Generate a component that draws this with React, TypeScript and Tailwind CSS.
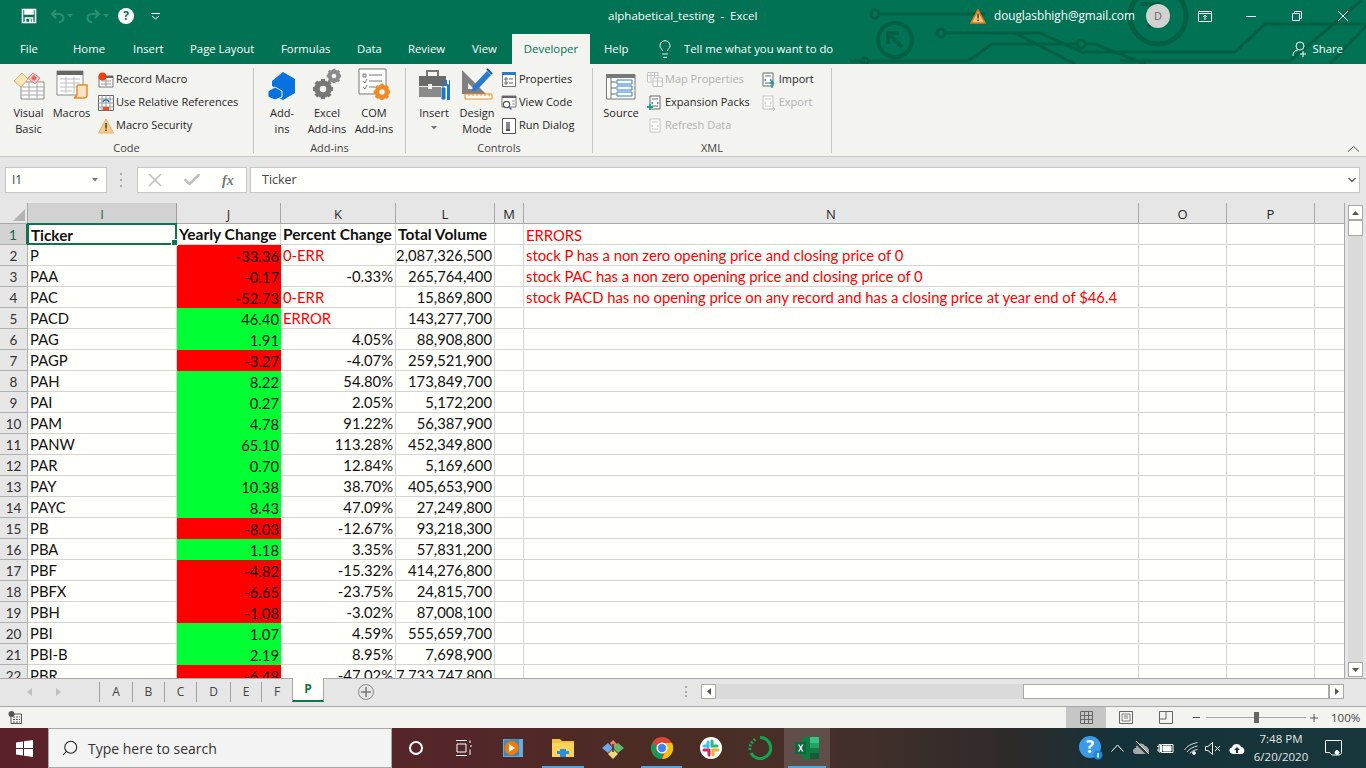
import { Fragment } from 'react';
import { ChevronDown, Lightbulb, X, Check, Search } from 'lucide-react';

const FONT = { fontFamily: '"Open Sans", "Noto Sans", sans-serif' };

type Row = { t: string; y: string; up?: boolean; p: string; perr?: boolean; v: string; n?: string };

const rows: Row[] = [
  { t: 'P', y: '-33.36', p: '0-ERR', perr: true, v: '2,087,326,500', n: 'stock P has a non zero opening price and closing price of 0' },
  { t: 'PAA', y: '-0.17', p: '-0.33%', v: '265,764,400', n: 'stock PAC has a non zero opening price and closing price of 0' },
  { t: 'PAC', y: '-52.73', p: '0-ERR', perr: true, v: '15,869,800', n: 'stock PACD has no opening price on any record and has a closing price at year end of $46.4' },
  { t: 'PACD', y: '46.40', up: true, p: 'ERROR', perr: true, v: '143,277,700' },
  { t: 'PAG', y: '1.91', up: true, p: '4.05%', v: '88,908,800' },
  { t: 'PAGP', y: '-3.27', p: '-4.07%', v: '259,521,900' },
  { t: 'PAH', y: '8.22', up: true, p: '54.80%', v: '173,849,700' },
  { t: 'PAI', y: '0.27', up: true, p: '2.05%', v: '5,172,200' },
  { t: 'PAM', y: '4.78', up: true, p: '91.22%', v: '56,387,900' },
  { t: 'PANW', y: '65.10', up: true, p: '113.28%', v: '452,349,800' },
  { t: 'PAR', y: '0.70', up: true, p: '12.84%', v: '5,169,600' },
  { t: 'PAY', y: '10.38', up: true, p: '38.70%', v: '405,653,900' },
  { t: 'PAYC', y: '8.43', up: true, p: '47.09%', v: '27,249,800' },
  { t: 'PB', y: '-8.03', p: '-12.67%', v: '93,218,300' },
  { t: 'PBA', y: '1.18', up: true, p: '3.35%', v: '57,831,200' },
  { t: 'PBF', y: '-4.82', p: '-15.32%', v: '414,276,800' },
  { t: 'PBFX', y: '-6.65', p: '-23.75%', v: '24,815,700' },
  { t: 'PBH', y: '-1.08', p: '-3.02%', v: '87,008,100' },
  { t: 'PBI', y: '1.07', up: true, p: '4.59%', v: '555,659,700' },
  { t: 'PBI-B', y: '2.19', up: true, p: '8.95%', v: '7,698,900' },
  { t: 'PBR', y: '-6.48', p: '-47.02%', v: '7,733,747,800' },
];

const headers = [
  { l: 'I', w: 'w-[149px]', sel: true },
  { l: 'J', w: 'w-[104px]' },
  { l: 'K', w: 'w-[115px]' },
  { l: 'L', w: 'w-[99px]' },
  { l: 'M', w: 'w-[29px]' },
  { l: 'N', w: 'w-[615px]' },
  { l: 'O', w: 'w-[88px]' },
  { l: 'P', w: 'w-[88px]' },
];

function Circuit() {
  return (
    <svg className="absolute left-[850px] top-0" width="516" height="64" viewBox="0 0 516 64" fill="none" stroke="#015f43" strokeWidth="3">
      <circle cx="25" cy="14" r="4" />
      <path d="M29 14H135" />
      <circle cx="91" cy="33" r="4" />
      <path d="M95 33H190L232 52H385L415 24H516" />
      <circle cx="231" cy="44" r="4" />
      <path d="M0 61H15M19 61H118L142 44H227M235 44H245L295 64M165 33L225 64M270 61H440L512 0" />
      <circle cx="15" cy="61" r="3" />
      <circle cx="45" cy="40" r="17" strokeWidth="4" />
      <path d="M38 44V33H49M38 33L52 47" strokeWidth="4" />
      <circle cx="308" cy="16" r="28" strokeWidth="5" />
      <path d="M290 4H308L298 28" strokeWidth="4" />
      <path d="M480 64L516 26" />
    </svg>
  );
}

function SaveIcon() {
  return (
    <svg width="16" height="16" viewBox="0 0 16 16" fill="none" stroke="#fff" strokeWidth="1.6">
      <path d="M1.5 1.5H14.5V14.5H1.5Z" />
      <path d="M4 1.5V6H12V1.5" fill="#fff" />
      <path d="M4.5 14.5V10H11.5V14.5" />
      <path d="M9 11V14" />
    </svg>
  );
}

function Undo({ flip }: { flip?: boolean }) {
  return (
    <svg width="15" height="14" viewBox="0 0 15 14" fill="none" stroke="#2b8f6f" strokeWidth="2" style={flip ? { transform: 'scaleX(-1)' } : undefined}>
      <path d="M6 1L2 5L6 9" />
      <path d="M2 5H9C12 5 13.5 7 13.5 9C13.5 11 12 13 9 13" />
    </svg>
  );
}

function Caret({ c = '#2b8f6f' }: { c?: string }) {
  return (
    <svg width="6" height="4" viewBox="0 0 6 4">
      <path d="M0 0H6L3 3.5Z" fill={c} />
    </svg>
  );
}

function VbaIcon() {
  return (
    <svg width="32" height="28" viewBox="0 0 32 28">
      <path d="M8 10H31V27H8Z" fill="#fff" stroke="#8a8a8a" />
      <path d="M8 15H31M8 19H31M8 23H31M16 10V27M24 10V27" stroke="#a8a8a8" />
      <path d="M1 9L9 1L15 7L8 15Z" fill="#fbe6b8" stroke="#d8b070" />
      <path d="M15 6L20 1L27 6L22 12Z" fill="#f6d0d0" stroke="#e07b7b" />
      <path d="M18 6L21 3L24 6L21 9Z" fill="#e85d5d" />
    </svg>
  );
}

function MacrosIcon() {
  return (
    <svg width="32" height="30" viewBox="0 0 32 30">
      <path d="M1 1H27V25H1Z" fill="#fff" stroke="#8a8a8a" />
      <path d="M1 1H27V5H1Z" fill="#666" />
      <path d="M4 9H24M4 13H24M4 17H24M4 21H16M10 7V23M18 7V23" stroke="#bdbdbd" />
      <path d="M22 15H31V25C31 27 30 28 28 28H18C20 27 21 26 21 24V17C21 16 21 15 22 15Z" fill="#fbe3c6" stroke="#f08a24" strokeWidth="1.5" />
    </svg>
  );
}

function RecordIcon() {
  return (
    <svg width="16" height="16" viewBox="0 0 16 16">
      <path d="M1 4H15V15H1Z" fill="#fff" stroke="#777" />
      <path d="M1 4H15V6H1Z" fill="#666" />
      <path d="M3 9H13M3 12H13M8 7V14" stroke="#999" />
      <circle cx="4.5" cy="4.5" r="4" fill="#f0400c" />
    </svg>
  );
}

function RelativeIcon() {
  return (
    <svg width="16" height="16" viewBox="0 0 16 16">
      <path d="M.5.5H15.5V15.5H.5Z" fill="#fff" stroke="#666" />
      <path d="M.5 4H15.5M.5 8H15.5M.5 12H15.5M4 .5V15.5M8 .5V15.5M12 .5V15.5" stroke="#999" />
      <path d="M5 12H11V15H5Z" fill="#f04a2a" />
      <path d="M5 7C6 4 10 4 11 7" fill="none" stroke="#2b78c5" strokeWidth="1.6" />
    </svg>
  );
}

function WarnIcon({ size = 16 }: { size?: number }) {
  return (
    <svg width={size} height={size} viewBox="0 0 16 16">
      <path d="M8 1L15.5 15H.5Z" fill="#f7c98a" stroke="#e9b36b" />
      <path d="M7.2 5H8.8V10.5H7.2ZM7.2 11.5H8.8V13H7.2Z" fill="#444" />
    </svg>
  );
}

function AddinsIcon() {
  return (
    <svg width="28" height="28" viewBox="0 0 28 28" fill="#0672e0">
      <path d="M15 0L27 7V21L15 28L9 25V17L4 14V9Z" />
      <path d="M7 15L14 19V25L7 28L0 25V19Z" stroke="#f3f3ef" strokeWidth="1" />
    </svg>
  );
}

function Gear({ x, y, r, c }: { x: number; y: number; r: number; c: string }) {
  return (
    <g>
      <circle cx={x} cy={y} r={r * 0.72} fill="none" stroke={c} strokeWidth={r * 0.5} />
      {[0, 45, 90, 135].map(a => (
        <rect key={a} x={x - r * 0.22} y={y - r * 1.12} width={r * 0.44} height={r * 2.24} fill={c} transform={`rotate(${a} ${x} ${y})`} />
      ))}
      <circle cx={x} cy={y} r={r * 0.36} fill="#f3f3ef" />
    </g>
  );
}

function ExcelAddinsIcon() {
  return (
    <svg width="28" height="32" viewBox="0 0 28 32">
      <Gear x={21} y={8} r={6.5} c="#8a8a8a" />
      <Gear x={10} y={21} r={9} c="#777" />
    </svg>
  );
}

function ComIcon() {
  return (
    <svg width="32" height="32" viewBox="0 0 32 32">
      <path d="M1 1H28V26H1Z" fill="#fff" stroke="#777" />
      <path d="M5 6H8V9H5Z" fill="none" stroke="#777" />
      <path d="M11 7H24M11 13H24M11 19H17" stroke="#777" />
      <path d="M5 13L7 15L9 11M5 19L7 21L9 17" fill="none" stroke="#777" />
      <Gear x={24} y={24} r={7.5} c="#f08a24" />
    </svg>
  );
}

function InsertIcon() {
  return (
    <svg width="32" height="32" viewBox="0 0 32 32">
      <path d="M9 8V3H20V8" fill="none" stroke="#777" strokeWidth="2" />
      <path d="M1 8H28V18H1Z" fill="#6a6a6a" />
      <path d="M1 19H23V29H1Z" fill="#8a8a8a" />
      <path d="M10 16H14V21H10Z" fill="#f3f3ef" />
      <path d="M25 13V20M25 20H27V31H24V20Z" fill="#1f76c5" stroke="#1f76c5" />
      <path d="M28 12V16L30 18V31H31V18L32 16V12" fill="none" stroke="#1f76c5" strokeWidth="2" />
    </svg>
  );
}

function DesignIcon() {
  return (
    <svg width="32" height="32" viewBox="0 0 32 32">
      <path d="M1 2L25 26H1Z" fill="#808080" />
      <path d="M7 15L13 21H7Z" fill="#f3f3ef" />
      <path d="M12 18L26 3L30 7L16 22L11 23Z" fill="#2a7ad1" />
      <path d="M26 1L31 6" stroke="#14579e" strokeWidth="2" />
      <path d="M4 26H31V31H4Z" fill="#fff" stroke="#f08a24" />
      <path d="M8 26V28M12 26V28M16 26V28M20 26V28M24 26V28M28 26V28" stroke="#f08a24" />
    </svg>
  );
}

function PropsIcon() {
  return (
    <svg width="14" height="15" viewBox="0 0 14 15">
      <path d="M.5.5H13.5V14.5H.5Z" fill="#fff" stroke="#777" />
      <path d="M0 0H14V3H0Z" fill="#2a7ad1" />
      <path d="M3 6H5V8H3ZM3 10H5V12H3Z" fill="none" stroke="#666" />
      <path d="M7 7H11M7 11H11" stroke="#666" />
    </svg>
  );
}

function ViewCodeIcon() {
  return (
    <svg width="16" height="15" viewBox="0 0 16 15">
      <path d="M1 1H15V12H1Z" fill="#fff" stroke="#777" />
      <path d="M1 1H15V3H1Z" fill="#666" />
      <circle cx="5.5" cy="9.5" r="3.2" fill="#fff" stroke="#555" strokeWidth="1.3" />
      <path d="M8 12L10.5 14.5" stroke="#2a7ad1" strokeWidth="1.6" />
      <path d="M11 6H14M11 9H14" stroke="#999" />
    </svg>
  );
}

function RunDialogIcon() {
  return (
    <svg width="14" height="16" viewBox="0 0 14 16">
      <path d="M.5.5H13.5V15.5H.5Z" fill="#fff" stroke="#555" />
      <path d="M4 4H8V11H4Z" fill="#888" />
      <path d="M4 11H8V13H4Z" fill="#555" />
    </svg>
  );
}

function SourceIcon() {
  return (
    <svg width="30" height="26" viewBox="0 0 30 26">
      <path d="M.5.5H29V25H.5Z" fill="#fff" stroke="#777" />
      <path d="M0 0H29V4H0Z" fill="#777" />
      <path d="M5 0V25" stroke="#777" />
      <path d="M5 8H10M5 14H10M5 20H10" stroke="#666" />
      <path d="M11 6H26V10H11ZM11 12H26V16H11ZM11 18H26V22H11Z" fill="#fff" stroke="#2a7ad1" />
    </svg>
  );
}

function DocTag({ c, extra }: { c: string; extra?: 'plus' | 'up' | 'right' }) {
  return (
    <svg width="16" height="16" viewBox="0 0 16 16">
      <path d="M3 1H13V14H3Z" fill="#fff" stroke={c} />
      <path d="M5 4H11M5 11H11" stroke={c} />
      <path d="M6 7L4.5 8L6 9M10 7L11.5 8L10 9" fill="none" stroke={extra === 'plus' || extra === 'up' ? '#2a7ad1' : c} />
      {extra === 'plus' && <path d="M0 12H6M3 9V15" stroke="#2a9d8f" strokeWidth="2" />}
      {extra === 'up' && <path d="M12 16V10M10 12L12 9L14 12" fill="none" stroke="#2a9d8f" strokeWidth="1.5" />}
      {extra === 'right' && <path d="M9 14H15M13 12L15 14L13 16" fill="none" stroke={c} />}
    </svg>
  );
}

function MapIcon() {
  return (
    <svg width="16" height="15" viewBox="0 0 16 15" stroke="#c4c4c4" fill="#fff">
      <path d="M.5.5H11V10H.5Z" />
      <path d="M.5 3.5H11M4 .5V10M7.5 .5V10" />
      <path d="M6 6H15.5V14.5H6Z" />
      <path d="M6 9H15.5M10.5 6V14.5" />
    </svg>
  );
}

function Ribbon({ text, icon, dim }: { text: string; icon: React.ReactNode; dim?: boolean }) {
  return (
    <div className={`flex items-center gap-[2px] h-[23px] whitespace-nowrap ${dim ? 'text-[#b2b2b2]' : 'text-[#262626]'}`}>
      <span className="flex w-[17px] justify-center">{icon}</span>
      <span>{text}</span>
    </div>
  );
}

function Big({ w, icon, label, caret }: { w: string; icon: React.ReactNode; label: string[]; caret?: boolean }) {
  return (
    <div className={`flex flex-col items-center ${w} leading-[16px] text-center text-[#262626] shrink-0`}>
      <div className="flex h-[32px] items-end justify-center">{icon}</div>
      <div className="mt-[5px] whitespace-nowrap">{label[0]}</div>
      {label[1] && <div className="whitespace-nowrap">{label[1]}</div>}
      {caret && <div className="mt-[5px]"><Caret c="#777" /></div>}
    </div>
  );
}

function Group({ w, title, pad, children }: { w: string; title: string; pad?: string; children: React.ReactNode }) {
  return (
    <div className={`flex flex-col ${w} h-[85px] mt-[4px] border-r border-[#c6c6c6] shrink-0`}>
      <div className="flex flex-1 min-h-0">{children}</div>
      <div className={`h-[16px] text-center leading-[22px] text-[#444] text-[11px] ${pad ?? ''}`}>{title}</div>
    </div>
  );
}

function ColHead({ l, w, sel }: { l: string; w: string; sel?: boolean }) {
  return (
    <div className={`${w} shrink-0 h-full flex items-center justify-center pt-[3px] border-r text-[13px] ${sel ? 'bg-[#d2d2d2] border-[#9e9e9e] text-[#0f6d4d]' : 'bg-[#e6e6e6] border-[#a8a8a8] text-[#262626]'}`}>
      {l}
    </div>
  );
}

function TabSep() {
  return <div className="w-px h-[20px] bg-[#a0a0a0]" />;
}

function TabLabel({ t, w }: { t: string; w: string }) {
  return <div className={`${w} text-center text-[#444]`}>{t}</div>;
}

function WinLogo() {
  return (
    <svg width="17" height="17" viewBox="0 0 17 17" fill="#fff">
      <path d="M0 2.4L7 1.4V8H0ZM8 1.3L17 0V8H8ZM0 9H7V15.6L0 14.6ZM8 9H17V17L8 15.7Z" />
    </svg>
  );
}

function TaskCell({ w, active, line, children }: { w: string; active?: boolean; line?: boolean; children: React.ReactNode }) {
  return (
    <div className={`relative ${w} h-full flex items-center justify-center shrink-0 ${active ? 'bg-white/15' : ''}`}>
      {children}
      {line && <div className="absolute bottom-0 left-[4px] right-[4px] h-[2px] bg-[#4ea6e6]" />}
    </div>
  );
}

function WarnTitle() {
  return (
    <svg width="16" height="15" viewBox="0 0 16 15">
      <path d="M8 1L15 14H1Z" fill="#f8c471" stroke="#e8731e" strokeWidth="1.5" />
      <path d="M7.3 4.5H8.7V9.5H7.3ZM7.3 10.5H8.7V12H7.3Z" fill="#333" />
    </svg>
  );
}

const cell = 'border-r border-b border-[#d4d4d4]';

export default function App() {
  return (
    <div className="w-[1366px] h-[768px] overflow-hidden flex flex-col bg-[#e6e6e6] text-[12px]" style={FONT}>
      {/* title bar */}
      <div className="relative h-[64px] shrink-0 bg-[#017354] text-white overflow-hidden">
        <Circuit />
        <div className="relative flex h-[32px] items-center text-[11.5px]">
          <div className="flex items-center w-[560px]">
            <span className="ml-[21px]"><SaveIcon /></span>
            <span className="ml-[13px]"><Undo /></span>
            <span className="ml-[2px] mr-[13px]"><Caret /></span>
            <Undo flip />
            <span className="ml-[2px]"><Caret /></span>
            <span className="ml-[9px] flex h-[16px] w-[16px] items-center justify-center rounded-full bg-white text-[#017354] text-[12px] font-bold">?</span>
            <svg className="ml-[17px]" width="9" height="7" viewBox="0 0 9 7" fill="none" stroke="#fff"><path d="M0 .5H9" /><path d="M1 3L4.5 6L8 3" /></svg>
          </div>
          <div className="ml-[48px] w-[250px] whitespace-pre">alphabetical_testing  -  Excel</div>
          <div className="ml-[112px]"><WarnTitle /></div>
          <div className="ml-[8px] w-[141px] whitespace-nowrap text-[11.75px]">douglasbhigh@gmail.com</div>
          <div className="ml-[11px] flex h-[24px] w-[24px] items-center justify-center rounded-full bg-[#d2d2d2] text-[#666] text-[11px]">D</div>
          <svg className="ml-[28px]" width="14" height="11" viewBox="0 0 14 11" fill="none" stroke="#fff"><path d="M.5.5H13.5V10.5H.5ZM.5 2.5H13.5M7 9V4.5M5 6L7 4L9 6" /></svg>
          <div className="ml-[34px] h-px w-[10px] bg-white" />
          <svg className="ml-[36px]" width="10" height="10" viewBox="0 0 10 10" fill="none" stroke="#fff"><path d="M.5 2.5H7.5V9.5H.5ZM2.5 2.5V.5H9.5V7.5H7.5" /></svg>
          <svg className="ml-[36px]" width="10" height="10" viewBox="0 0 10 10" fill="none" stroke="#fff"><path d="M0 0L10 10M10 0L0 10" /></svg>
        </div>
        <div className="relative flex h-[32px] items-center pt-[2px] text-[11.35px] whitespace-nowrap">
          <span className="ml-[20px] w-[53px]">File</span>
          <span className="w-[60px]">Home</span>
          <span className="w-[57px]">Insert</span>
          <span className="w-[91px]">Page Layout</span>
          <span className="w-[76px]">Formulas</span>
          <span className="w-[51px]">Data</span>
          <span className="w-[64px]">Review</span>
          <span className="w-[40px]">View</span>
          <span className="flex h-[30px] w-[78px] items-center justify-center bg-[#f3f3ef] text-[#017354]">Developer</span>
          <span className="ml-[14px] w-[53px]">Help</span>
          <Lightbulb className="-ml-[2px]" size={20} strokeWidth={1.1} />
          <span className="ml-[9px]">Tell me what you want to do</span>
          <span className="ml-auto mr-[23px] flex items-center gap-[5px]">
            <svg width="16" height="16" viewBox="0 0 16 16" fill="none" stroke="#fff"><circle cx="8" cy="5" r="4" /><path d="M1 15C1 11 3 9.5 6 9M11 10V16M8 13H14" /></svg>
            Share
          </span>
        </div>
      </div>

      {/* ribbon */}
      <div className="relative flex h-[93px] shrink-0 bg-[#f3f3ef] border-b border-[#c8c8c8] pl-[5px] text-[11px]">
        <Group w="w-[249px]" title="Code" pad="pr-[5px]">
          <Big w="w-[47px]" icon={<VbaIcon />} label={['Visual', 'Basic']} />
          <Big w="w-[39px]" icon={<MacrosIcon />} label={['Macros']} />
          <div className="ml-[6px] flex flex-col">
            <Ribbon text="Record Macro" icon={<RecordIcon />} />
            <Ribbon text="Use Relative References" icon={<RelativeIcon />} />
            <Ribbon text="Macro Security" icon={<WarnIcon />} />
          </div>
        </Group>
        <Group w="w-[152px]" title="Add-ins">
          <div className="ml-[3px]"><Big w="w-[50px]" icon={<AddinsIcon />} label={['Add-', 'ins']} /></div>
          <Big w="w-[40px]" icon={<ExcelAddinsIcon />} label={['Excel', 'Add-ins']} />
          <div className="ml-[2px]"><Big w="w-[50px]" icon={<ComIcon />} label={['COM', 'Add-ins']} /></div>
        </Group>
        <Group w="w-[187px]" title="Controls">
          <div className="ml-[2px]"><Big w="w-[52px]" icon={<InsertIcon />} label={['Insert']} caret /></div>
          <Big w="w-[34px]" icon={<DesignIcon />} label={['Design', 'Mode']} />
          <div className="ml-[6px] flex flex-col">
            <Ribbon text="Properties" icon={<PropsIcon />} />
            <Ribbon text="View Code" icon={<ViewCodeIcon />} />
            <Ribbon text="Run Dialog" icon={<RunDialogIcon />} />
          </div>
        </Group>
        <Group w="w-[239px]" title="XML">
          <div className="ml-[3px]"><Big w="w-[50px]" icon={<SourceIcon />} label={['Source']} /></div>
          <div className="flex flex-col">
            <Ribbon text="Map Properties" icon={<MapIcon />} dim />
            <Ribbon text="Expansion Packs" icon={<DocTag c="#666" extra="plus" />} />
            <Ribbon text="Refresh Data" icon={<DocTag c="#c4c4c4" />} dim />
          </div>
          <div className="ml-[10px] flex flex-col">
            <Ribbon text="Import" icon={<DocTag c="#666" extra="up" />} />
            <Ribbon text="Export" icon={<DocTag c="#c4c4c4" extra="right" />} dim />
          </div>
        </Group>
        <svg className="absolute right-[7px] bottom-[4px]" width="11" height="6" viewBox="0 0 11 6" fill="none" stroke="#555"><path d="M0 5.5L5.5 .5L11 5.5" /></svg>
      </div>

      {/* formula bar */}
      <div className="flex h-[46px] shrink-0 items-start pt-[10px] bg-[#e6e6e6] text-[12px]">
        <div className="ml-[5px] flex h-[26px] w-[102px] items-center justify-between border border-[#c6c6c6] bg-[#fffffb] pl-[6px] pr-[8px] text-[#444]">
          I1
          <Caret c="#777" />
        </div>
        <div className="ml-[13px] mt-[6px] flex h-[14px] w-[3px] flex-col justify-between">
          <i className="block h-[2px] w-[2px] bg-[#a8a8a8]" /><i className="block h-[2px] w-[2px] bg-[#a8a8a8]" /><i className="block h-[2px] w-[2px] bg-[#a8a8a8]" />
        </div>
        <div className="ml-[14px] flex h-[26px] w-[110px] items-center border border-[#c6c6c6] bg-[#fffffb]">
          <X className="ml-[6px] text-[#c0c0c0]" size={22} strokeWidth={1.8} />
          <Check className="ml-[16px] text-[#c0c0c0]" size={20} strokeWidth={3} />
          <span className="ml-[20px] text-[#777] text-[14px] italic font-bold" style={{ fontFamily: '"Liberation Serif", serif' }}>fx</span>
        </div>
        <div className="ml-[3px] flex h-[26px] w-[1110px] items-center justify-between border border-[#c6c6c6] bg-[#fffffb] pl-[11px] pr-[1px] text-[#444] text-[12.5px]">
          Ticker
          <ChevronDown size={12} strokeWidth={3} className="text-[#666]" />
        </div>
      </div>

      {/* sheet */}
      <div className="flex h-[475px] shrink-0 overflow-hidden bg-[#fffffb]">
        <div className="w-[1345px] shrink-0 overflow-hidden border-r border-[#a8a8a8]">
          <div className="flex h-[21px] bg-[#e6e6e6] border-b border-[#a8a8a8]">
            <div className="relative w-[28px] shrink-0 border-r border-[#a8a8a8]">
              <div className="absolute bottom-[2px] right-[2px] h-0 w-0 border-b-[12px] border-l-[12px] border-b-[#b4b4b4] border-l-transparent" />
            </div>
            {headers.map(h => <ColHead key={h.l + h.w} l={h.l} w={h.w} sel={h.sel} />)}
            <div className="flex-1" />
          </div>
          <div className="grid grid-cols-[28px_149px_104px_115px_99px_29px_615px_88px_88px_1fr] auto-rows-[21px] font-[Lato] text-[14.8px] text-[#111]">
            <div className="flex items-center justify-center bg-[#d2d2d2] border-r-2 border-r-[#0f7350] border-b border-[#b0b0b0] text-[#0f6d4d] text-[13.5px] pt-[2px]">1</div>
            <div className="relative flex items-center px-[2px] pt-[2px] font-bold text-[15.3px] border-2 border-[#0f7350] -mt-px -ml-px h-[22px]">
              Ticker
              <div className="absolute -bottom-[3px] -right-[3px] h-[5px] w-[5px] bg-[#0f7350] border border-white box-content" />
            </div>
            <div className={`flex items-center pl-[2px] pt-[2px] font-bold text-[15.5px] whitespace-nowrap ${cell}`}>Yearly Change</div>
            <div className={`flex items-center pl-[2px] pt-[2px] font-bold text-[15.5px] whitespace-nowrap ${cell}`}>Percent Change</div>
            <div className={`flex items-center pl-[2px] pt-[2px] font-bold text-[15.5px] whitespace-nowrap ${cell}`}>Total Volume</div>
            <div className={cell} />
            <div className={`flex items-center px-[2px] pt-[2px] text-[#ff0000] ${cell}`}>ERRORS</div>
            <div className={cell} />
            <div className={cell} />
            <div className="border-b border-[#d4d4d4]" />
            {rows.map((r, i) => (
              <Fragment key={r.t}>
                <div className="flex items-center justify-center bg-[#e6e6e6] border-r border-b border-[#b0b0b0] text-[#333] text-[13.5px] pt-[2px]">{i + 2}</div>
                <div className={`flex items-center px-[2px] pt-px ${cell}`}>{r.t}</div>
                <div className={`flex items-center justify-end pr-[2px] pt-px ${r.up ? 'bg-[#00ff33]' : 'bg-[#ff0000]'}`}>{r.y}</div>
                <div className={`flex items-center pt-px ${cell} ${r.perr ? 'justify-start pl-[2px] text-[#ff0000]' : 'justify-end pr-[2px]'}`}>{r.p}</div>
                <div className={`flex items-center justify-end pr-[2px] pt-px whitespace-nowrap ${cell}`}>{r.v}</div>
                <div className={cell} />
                <div className={`flex items-center px-[2px] pt-px text-[#ff0000] whitespace-nowrap ${cell}`}>{r.n}</div>
                <div className={cell} />
                <div className={cell} />
                <div className="border-b border-[#d4d4d4]" />
              </Fragment>
            ))}
          </div>
        </div>
        {/* vertical scrollbar */}
        <div className="flex flex-1 flex-col items-center bg-[#e6e6e6] pt-[2px] pb-[1px]">
          <div className="flex h-[15px] w-[15px] items-center justify-center border border-[#a8a8a8] bg-[#fffffb]">
            <svg width="7" height="4" viewBox="0 0 7 4"><path d="M0 4H7L3.5 0Z" fill="#555" /></svg>
          </div>
          <div className="h-[16px] w-[15px] border border-[#a8a8a8] bg-[#fffffb]" />
          <div className="w-[15px] flex-1 bg-[#dadada]" />
          <div className="flex h-[15px] w-[15px] items-center justify-center border border-[#a8a8a8] bg-[#fffffb]">
            <svg width="7" height="4" viewBox="0 0 7 4"><path d="M0 0H7L3.5 4Z" fill="#555" /></svg>
          </div>
        </div>
      </div>

      {/* sheet tabs */}
      <div className="relative flex h-[29px] shrink-0 items-start border-t border-[#a8a8a8] border-b bg-[#e6e6e6] text-[12px]">
        <svg className="ml-[27px] mt-[9px]" width="5" height="8" viewBox="0 0 5 8"><path d="M5 0V8L0 4Z" fill="#c0c0c0" /></svg>
        <svg className="ml-[24px] mt-[9px]" width="5" height="8" viewBox="0 0 5 8"><path d="M0 0V8L5 4Z" fill="#c0c0c0" /></svg>
        <div className="ml-[38px] mt-[3px] flex h-[20px] items-center">
          <TabSep />
          <TabLabel t="A" w="w-[32px]" />
          <TabSep />
          <TabLabel t="B" w="w-[31px]" />
          <TabSep />
          <TabLabel t="C" w="w-[31px]" />
          <TabSep />
          <TabLabel t="D" w="w-[33px]" />
          <TabSep />
          <TabLabel t="E" w="w-[30px]" />
          <TabSep />
          <TabLabel t="F" w="w-[30px]" />
        </div>
        <div className="flex h-[24px] w-[32px] items-center justify-center bg-[#fffffb] border-x border-[#a8a8a8] border-b-2 border-b-[#0f7350] font-bold text-[#0f7350] -mt-px">P</div>
        <div className="ml-[34px] mt-[5px] flex h-[16px] w-[16px] items-center justify-center rounded-full border border-[#8a8a8a] text-[#777]">
          <svg width="10" height="10" viewBox="0 0 10 10" stroke="#777" strokeWidth="1.5"><path d="M5 0V10M0 5H10" /></svg>
        </div>
        <div className="ml-[311px] mt-[7px] flex h-[11px] w-[3px] flex-col justify-between">
          <i className="block h-[2px] w-[2px] bg-[#a8a8a8]" /><i className="block h-[2px] w-[2px] bg-[#a8a8a8]" /><i className="block h-[2px] w-[2px] bg-[#a8a8a8]" />
        </div>
        <div className="ml-[13px] mt-[5px] flex h-[15px] w-[643px]">
          <div className="flex h-[15px] w-[15px] items-center justify-center border border-[#a8a8a8] bg-[#fffffb]">
            <svg width="4" height="7" viewBox="0 0 4 7"><path d="M4 0V7L0 3.5Z" fill="#555" /></svg>
          </div>
          <div className="w-[307px] bg-[#dadada]" />
          <div className="flex-1 border border-[#a8a8a8] bg-[#fffffb]" />
          <div className="flex h-[15px] w-[15px] items-center justify-center border border-[#a8a8a8] bg-[#fffffb]">
            <svg width="4" height="7" viewBox="0 0 4 7"><path d="M0 0V7L4 3.5Z" fill="#555" /></svg>
          </div>
        </div>
      </div>

      {/* status bar */}
      <div className="flex h-[21px] shrink-0 items-center bg-[#f3f3ef] text-[11.5px] text-[#444]">
        <svg className="ml-[8px]" width="14" height="13" viewBox="0 0 14 13">
          <circle cx="3.5" cy="3" r="3" fill="#555" />
          <path d="M3 3H13.5V12.5H3Z" fill="none" stroke="#555" />
          <path d="M5 6H12M5 8.5H12M5 11H12" stroke="#555" strokeDasharray="2 1" />
        </svg>
        <div className="ml-[1044px] flex h-full w-[40px] items-center justify-center bg-[#c6c6c6]">
          <svg width="13" height="13" viewBox="0 0 13 13" fill="none" stroke="#666"><path d="M.5.5H12.5V12.5H.5ZM.5 4.5H12.5M.5 8.5H12.5M4.5 .5V12.5M8.5 .5V12.5" /></svg>
        </div>
        <svg className="ml-[13px]" width="14" height="13" viewBox="0 0 14 13" fill="none" stroke="#666"><path d="M.5.5H13.5V12.5H.5Z" /><path d="M3 3H11V10H3ZM5 5H9M5 7H9" strokeWidth=".8" /></svg>
        <svg className="ml-[26px]" width="14" height="13" viewBox="0 0 14 13" fill="none" stroke="#666"><path d="M.5.5H13.5V12.5H.5ZM.5 8H7V.5" /></svg>
        <div className="ml-[20px] h-px w-[7px] bg-[#555]" />
        <div className="relative ml-[6px] h-[1px] w-[100px] bg-[#a8a8a8]">
          <div className="absolute left-[48px] -top-[5px] h-[11px] w-[5px] bg-[#666]" />
        </div>
        <svg className="ml-[4px]" width="8" height="8" viewBox="0 0 8 8" stroke="#555"><path d="M4 0V8M0 4H8" /></svg>
        <span className="ml-[13px]">100%</span>
      </div>

      {/* taskbar */}
      <div className="flex h-[40px] shrink-0 items-center text-white bg-[linear-gradient(90deg,#5b2129_0%,#55252a_30%,#4a2d24_50%,#46302a_60%,#2e2a2a_74%,#143239_82%,#17373c_100%)]">
        <div className="flex h-full w-[48px] items-center justify-center"><WinLogo /></div>
        <div className="flex h-full w-[344px] items-center bg-[#f3f3f3] border border-[#a8a8a8] text-[#333] text-[14px]">
          <Search className="ml-[12px] -scale-x-100 text-[#222]" size={18} strokeWidth={1.4} />
          <span className="ml-[9px]">Type here to search</span>
        </div>
        <TaskCell w="w-[48px]"><span className="block h-[14px] w-[14px] rounded-full border-2 border-white" /></TaskCell>
        <TaskCell w="w-[48px]">
          <svg width="16" height="16" viewBox="0 0 16 16" fill="none" stroke="#fff"><path d="M0 .5H11M0 15.5H11M1 4H10V12H1ZM14 .5V3M14 6H16M14 9.5V15" /></svg>
        </TaskCell>
        <TaskCell w="w-[50px]">
          <svg width="20" height="20" viewBox="0 0 20 20"><path d="M0 1H20V19H0Z" fill="#6aaad8" /><path d="M1 2L16 1V18L1 18Z" fill="#3f86bd" /><circle cx="8.5" cy="10" r="7" fill="#f57c00" /><path d="M6 6L12 10L6 14Z" fill="#fff" /></svg>
        </TaskCell>
        <TaskCell w="w-[50px]" line>
          <svg width="22" height="18" viewBox="0 0 22 18"><path d="M0 0H8L10 2H22V18H0Z" fill="#f5c23c" /><path d="M0 4H22V18H0Z" fill="#fbd45c" /><path d="M8 10H14V18H8Z" fill="#2a8fdc" /><path d="M5 12H17V15H5Z" fill="#2a8fdc" /></svg>
        </TaskCell>
        <TaskCell w="w-[49px]">
          <svg width="24" height="24" viewBox="0 0 24 24">
            <path d="M12 4L17 9L12 12L9 7Z" fill="#f0816d" />
            <path d="M7 7L12 12L7 17L1 12Z" fill="#6fa8f0" />
            <path d="M17 7L23 12L17 17L12 12Z" fill="#63b86a" />
            <path d="M12 13L17 18L12 23L7 18Z" fill="#f0d878" />
            <path d="M12 8V16" stroke="#3a2a20" strokeWidth="1.5" />
          </svg>
        </TaskCell>
        <TaskCell w="w-[49px]" line>
          <svg width="24" height="24" viewBox="0 0 24 24">
            <circle cx="12" cy="12" r="11" fill="#db4437" />
            <path d="M12 12L2.5 17.5A11 11 0 0 0 12 23Z" fill="#0f9d58" />
            <path d="M2.5 6.5A11 11 0 0 0 2.5 17.5L8 12Z" fill="#0f9d58" />
            <path d="M12 7H22A11 11 0 0 1 12 23L17 12Z" fill="#f4c20d" />
            <circle cx="12" cy="12" r="5.5" fill="#fff" />
            <circle cx="12" cy="12" r="4.2" fill="#4285f4" />
          </svg>
        </TaskCell>
        <TaskCell w="w-[50px]">
          <svg width="22" height="22" viewBox="0 0 22 22">
            <circle cx="11" cy="11" r="11" fill="#fff" />
            <path d="M8 10V5" stroke="#36c5f0" strokeWidth="3" strokeLinecap="round" />
            <path d="M4 9H8" stroke="#36c5f0" strokeWidth="3" strokeLinecap="round" />
            <path d="M12 4V9H17" stroke="#2eb67d" strokeWidth="3" strokeLinecap="round" fill="none" />
            <path d="M13 13H18" stroke="#ecb22e" strokeWidth="3" strokeLinecap="round" />
            <path d="M13 13V18" stroke="#ecb22e" strokeWidth="3" strokeLinecap="round" />
            <path d="M9 13V18M4 13H9" stroke="#e01e5a" strokeWidth="3" strokeLinecap="round" fill="none" />
          </svg>
        </TaskCell>
        <TaskCell w="w-[48px]">
          <svg width="24" height="24" viewBox="0 0 24 24" fill="none">
            <path d="M12 1.5A10.5 10.5 0 1 1 3 17" stroke="#12a650" strokeWidth="3" />
            <path d="M2 14A10.5 10.5 0 0 1 8 3" stroke="#12a650" strokeWidth="3" strokeDasharray="2 1.5" />
          </svg>
        </TaskCell>
        <TaskCell w="w-[46px]" active line>
          <svg width="24" height="22" viewBox="0 0 24 22">
            <path d="M7 0H24V22H7Z" fill="#107c41" />
            <path d="M15 0H24V6H15Z" fill="#33c481" />
            <path d="M15 6H24V11H15Z" fill="#21a366" />
            <path d="M15 16H24V22H15Z" fill="#185c37" />
            <path d="M0 5H11V17H0Z" fill="#0b6a3e" />
            <path d="M3 7.5L5 11L3 14.5H4.5L5.7 12.2L7 14.5H8.5L6.5 11L8.5 7.5H7L5.7 9.8L4.5 7.5Z" fill="#fff" />
          </svg>
        </TaskCell>
        <div className="flex-1" />
        <svg width="24" height="24" viewBox="0 0 24 24">
          <circle cx="11" cy="11" r="11" fill="#3a9ae8" />
          <text x="11" y="17" textAnchor="middle" fontSize="17" fontWeight="bold" fill="#fff" fontFamily="Open Sans">?</text>
          <circle cx="19" cy="19" r="4.5" fill="#1e88d8" />
          <path d="M19 17V21.5" stroke="#fff" strokeWidth="1.5" />
        </svg>
        <svg className="ml-[8px]" width="13" height="8" viewBox="0 0 13 8" fill="none" stroke="#fff"><path d="M.5 7.5L6.5 1L12.5 7.5" /></svg>
        <svg className="ml-[9px]" width="17" height="14" viewBox="0 0 17 14"><path d="M3 13C-1 13 -1 7 3 7C3 2 10 1 12 5C16 5 18 13 13 13Z" fill="#a8a8a8" /><path d="M2 1L15 14" stroke="#1b3a3e" strokeWidth="2" /><path d="M3 0L16 13" stroke="#e0e0e0" /></svg>
        <svg className="ml-[7px]" width="17" height="11" viewBox="0 0 17 11" fill="none" stroke="#fff"><path d="M4.5 1.5H16V9.5H4.5ZM0 3.5H2M0 7H2M2 1.5H3.5V9H2Z" /><path d="M6 3H14V8H6Z" fill="#fff" /></svg>
        <svg className="ml-[10px]" width="14" height="13" viewBox="0 0 14 13" fill="none" stroke="#d8d8d8"><path d="M.5 8C3 4 7 2 13.5 .5M3 10C5 7 9 5 13.5 4M6 11.5C7 9.5 10 8 13.5 7.5" /><circle cx="10" cy="11" r="1.5" fill="#fff" /></svg>
        <svg className="ml-[7px]" width="16" height="13" viewBox="0 0 16 13" fill="none" stroke="#fff"><path d="M.5 4.5H3L7.5 .5V12.5L3 8.5H.5ZM10 4L15 9M15 4L10 9" /></svg>
        <svg className="ml-[8px]" width="16" height="11" viewBox="0 0 16 11"><path d="M4 11C0 11 -1 5 3 4.5C4 0 11 0 12 4C16 4 17 11 12 11Z" fill="#fff" /><path d="M8 4L5 7H7V10H9V7H11Z" fill="#17373c" /></svg>
        <div className="ml-[5px] w-[62px] text-center text-[11.5px] leading-[18px] text-[#e4e4e4]">
          <div>7:48 PM</div>
          <div>6/20/2020</div>
        </div>
        <svg className="ml-[13px] mr-[24px]" width="17" height="16" viewBox="0 0 17 16" fill="none" stroke="#fff"><path d="M.5.5H16.5V12.5C16.5 14 15 15 13 15H7L4.5 12.5H.5Z" /><circle cx="12" cy="12.5" r="2" fill="#fff" /></svg>
      </div>
    </div>
  );
}
